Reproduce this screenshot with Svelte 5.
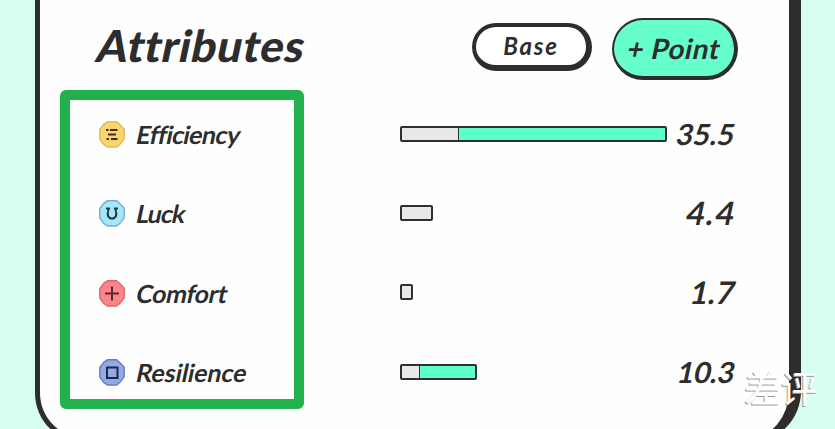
<script>
  const rows = [
    { name: 'Efficiency', value: '35.5', base: 56, extra: 207, spacing: -0.6, gap: 0.2, size: 29, icon: 'lines', fill: '#f8d66b', rim: '#dfb95b' },
    { name: 'Luck', value: '4.4', base: 29, extra: 0, spacing: -1, gap: 1.6, size: 32, icon: 'shoe', fill: '#a2e8f7', rim: '#77abd5' },
    { name: 'Comfort', value: '1.7', base: 9, extra: 0, spacing: -0.4, gap: 0.4, size: 31, icon: 'plus', fill: '#fc858a', rim: '#d9686d' },
    { name: 'Resilience', value: '10.3', base: 17, extra: 56, spacing: -0.1, gap: -0.1, size: 29, icon: 'square', fill: '#92aaea', rim: '#5f7fc0' }
  ];
</script>

<div class="page">
  <section class="card">
    <header>
      <h1>Attributes</h1>
      <button class="base">Base</button>
      <button class="point"><span class="slant">+ Point</span></button>
    </header>
    <ul>
      {#each rows as row}
        <li>
          <svg class="icon" viewBox="0 0 26 27" aria-hidden="true">
            <path d="M8.5 .8h9l3 2.5 4.700 5v9.500l-4.200 5.500-3.500 2.700h-9L4.500 23.300.8 18V8.500l4-5.200z" fill={row.fill} stroke={row.rim} stroke-width="1.4" />
            {#if row.icon === 'lines'}
              <path d="M7 9h2.500M11 9h7.500M9 13.500h8M7.500 18h2.500M12 18h6.500" stroke="#50251f" stroke-width="2" />
            {:else if row.icon === 'shoe'}
              <path d="M7 8.500h4M15 8.500h4M9.300 8.500v2c-1.500 4-.2 8 3.700 8s5.200-4 3.700-8v-2" fill="none" stroke="#233b45" stroke-width="2" />
            {:else if row.icon === 'plus'}
              <path d="M13 6.500v14M6 13.500h14" stroke="#572b2d" stroke-width="2" />
            {:else}
              <rect x="8" y="8.500" width="10.500" height="10.500" fill="none" stroke="#20283d" stroke-width="2" />
            {/if}
          </svg>
          <span class="name"><span class="slant" style:letter-spacing="{row.spacing}px">{row.name}</span></span>
          <span class="track">
            <span class="bar">
              <span class="grey" style:width="{row.base}px"></span>
              {#if row.extra}<span class="mint" style:width="{row.extra}px"></span>{/if}
            </span>
          </span>
          <span class="value slant" style:font-size="{row.size}px" style:letter-spacing="{row.gap}px" style:margin-right="{-row.gap}px">{row.value}</span>
        </li>
      {/each}
    </ul>
  </section>
  <div class="frame"></div>
  <div class="mark">差评</div>
</div>

<style>
  :global(body) { margin: 0; }
  .page {
    position: relative;
    width: 835px;
    height: 429px;
    overflow: hidden;
    background: #d5fdf1;
    font-family: Lato, "Noto Sans CJK SC", sans-serif;
    font-weight: 700;
    color: #2d2d2d;
  }
  .card {
    box-sizing: border-box;
    width: 766px;
    height: 443px;
    margin-left: 35px;
    padding: 18px 54px 0 59px;
    background: #fefefe;
    border: solid #2d2d2b;
    border-width: 0 12px 5px 5px;
    border-radius: 0 0 52px 50px;
  }
  .slant { display: inline-block; transform: skewX(-12deg); }
  header { display: flex; align-items: flex-start; height: 77px; }
  h1 {
    margin: 1px auto 0 -1px;
    font-size: 44px;
    line-height: 53px;
    font-weight: 900;
    letter-spacing: 0.750px;
    white-space: nowrap;
    transform: skewX(-12deg);
  }
  button {
    box-sizing: border-box;
    padding: 0;
    font: inherit;
    color: inherit;
    border: solid #2d2d2d;
    white-space: nowrap;
    text-align: center;
  }
  .base {
    width: 120px;
    height: 48px;
    margin: 5px 20px 0 0;
    background: #fff;
    border-width: 4px 6px 6px 4px;
    border-radius: 24px;
    font-size: 24px;
    font-style: italic;
    line-height: 36px;
    letter-spacing: 1.800px;
  }
  .point {
    width: 126px;
    height: 62px;
    background: #66ffcc;
    border-width: 2px 4px 4px 2px;
    border-radius: 31px;
    font-size: 28px;
    line-height: 53px;
    letter-spacing: 0.500px;
    margin-right: -3px;
  }
  ul { margin: 0; padding: 0; list-style: none; }
  li { display: flex; align-items: center; height: 79.300px; }
  .icon { width: 26px; height: 27px; flex: none; }
  .name { width: 264px; padding-left: 12px; margin-right: -1px; margin-bottom: 1px; font-size: 25px; line-height: 30px; }
  .track { display: flex; flex: none; width: 267px; margin-bottom: 2px; }
  .bar {
    display: flex;
    box-sizing: border-box;
    height: 16px;
    border: 2px solid #2d302f;
    border-radius: 2px;
  }
  .grey { background: #e8e8e8; }
  .mint { box-sizing: border-box; background: #5dffca; border-left: 1.500px solid #2d302f; }
  .value { margin: -2px 0 0 auto; line-height: 34px; }
  .frame {
    position: absolute;
    box-sizing: border-box;
    left: 60px;
    top: 90px;
    width: 244px;
    height: 319px;
    border: 10px solid #22b14c;
    border-radius: 6px;
  }
  .mark {
    position: absolute;
    left: 744px;
    top: 360px;
    font: 400 37px/54px "Noto Sans CJK SC", sans-serif;
    color: #fff;
    text-shadow: -1px 1px 0 #999;
  }
</style>
